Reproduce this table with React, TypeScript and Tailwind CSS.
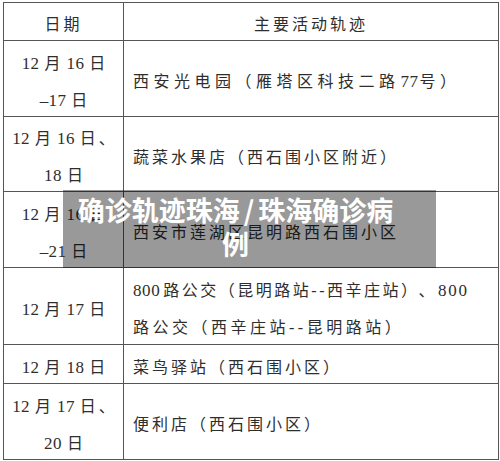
function N({ children }: { children: React.ReactNode }) {
  return <span className="ml-[3px] mr-[5px] text-[17px] tracking-[0.4px]">{children}</span>;
}

export default function App() {
  const cellBase = "border-r border-b border-[#555] pt-[6px]";
  const dateCell = `${cellBase} flex flex-col items-center justify-center text-center leading-[37px] whitespace-nowrap`;
  const mainCell = `${cellBase} flex flex-col justify-center pl-[9px] leading-[37px] whitespace-nowrap`;
  return (
    <div className="relative w-[500px] h-[461px] bg-white overflow-hidden">
      <div className="ml-[3px] mt-[2px] grid w-fit grid-cols-[120px_375px] grid-rows-[38px_76px_75px_76px_77px_39px_76px] border-l border-t border-[#555] text-[16px] tracking-[3px] text-[#2e2e2e] font-['Liberation_Serif','Noto_Sans_CJK_SC',serif]">
        <div className={dateCell}>日期</div>
        <div className={`${cellBase} flex items-center justify-center leading-[37px]`}>主要活动轨迹</div>

        <div className={dateCell}>
          <div><N>12</N>月<N>16</N>日</div>
          <div><N>–17</N>日</div>
        </div>
        <div className={mainCell}>
          <div className="tracking-[4.5px]">
            西安光电园（雁塔区科技二路<span className="ml-[1px] mr-[1px] text-[17px] tracking-[0.5px]">77</span>号）
          </div>
        </div>

        <div className={dateCell}>
          <div><N>12</N>月<N>16</N>日、</div>
          <div><N>18</N>日</div>
        </div>
        <div className={mainCell}>
          <div>蔬菜水果店（西石围小区附近）</div>
        </div>

        <div className={dateCell}>
          <div><N>12</N>月<N>16</N>日</div>
          <div><N>–21</N>日</div>
        </div>
        <div className={mainCell}>
          <div>西安市莲湖区昆明路西石围小区</div>
        </div>

        <div className={dateCell}>
          <div><N>12</N>月<N>17</N>日</div>
        </div>
        <div className={mainCell}>
          <div className="tracking-[2.5px]">
            <span className="mr-[3px] text-[17px] tracking-[0.6px]">800</span>路公交（昆明路站--西辛庄站）<span className="ml-[7px]">、</span><span className="ml-[1px] text-[17px] tracking-[1.8px]">800</span>
          </div>
          <div className="tracking-[3.5px]">路公交（西辛庄站--昆明路站）</div>
        </div>

        <div className={dateCell}>
          <div><N>12</N>月<N>18</N>日</div>
        </div>
        <div className={mainCell}>
          <div>菜鸟驿站（西石围小区）</div>
        </div>

        <div className={dateCell}>
          <div><N>12</N>月<N>17</N>日、</div>
          <div><N>20</N>日</div>
        </div>
        <div className={mainCell}>
          <div>便利店（西石围小区）</div>
        </div>
      </div>

      <div className="absolute left-[63px] top-[190px] w-[373px] h-[78px] bg-black/40">
        <div className="ml-[13px] w-[319px] pt-[3px] text-center whitespace-nowrap text-[27px] leading-[34px] font-bold text-white font-['Noto_Sans_CJK_SC',sans-serif]">
          <div>
            确诊轨迹珠海<span className="mx-[4px]">/</span>珠海确诊病
          </div>
          <div>例</div>
        </div>
      </div>
    </div>
  );
}
